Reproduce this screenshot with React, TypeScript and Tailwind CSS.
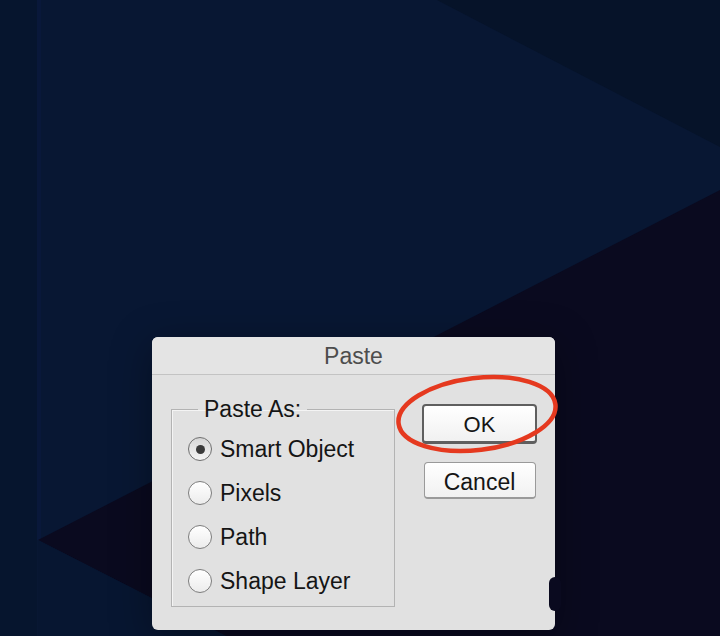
import { useState } from "react";

type Option = "smart" | "pixels" | "path" | "shape";

const options: { id: Option; label: string }[] = [
  { id: "smart", label: "Smart Object" },
  { id: "pixels", label: "Pixels" },
  { id: "path", label: "Path" },
  { id: "shape", label: "Shape Layer" },
];

function Backdrop() {
  return (
    <svg
      className="absolute inset-0"
      width="720"
      height="636"
      viewBox="0 0 720 636"
      aria-hidden
    >
      <rect x="0" y="0" width="720" height="636" fill="#081733" />
      <rect x="0" y="0" width="37" height="636" fill="#06152e" />
      <rect x="37" y="0" width="4" height="540" fill="#0a1a42" opacity="0.45" />
      <polygon points="437,0 720,0 720,147" fill="#061329" />
      <polygon points="38,540 720,190 720,636 226,636" fill="#0a0a1f" />
      <polygon points="38,540 226,636 38,636" fill="#071631" />
    </svg>
  );
}

function Radio({ checked }: { checked: boolean }) {
  return (
    <span
      className={
        checked
          ? "flex h-[24px] w-[24px] shrink-0 items-center justify-center rounded-full border border-[#6f6f6f] bg-gradient-to-b from-[#d6d6d6] to-[#f4f4f4]"
          : "flex h-[24px] w-[24px] shrink-0 items-center justify-center rounded-full border border-[#7d7d7d] bg-gradient-to-b from-[#ffffff] to-[#ececec]"
      }
    >
      {checked && <span className="h-[9px] w-[9px] rounded-full bg-[#3a3a3a]" />}
    </span>
  );
}

export default function App() {
  const [value, setValue] = useState<Option>("smart");

  return (
    <div className="relative h-[636px] w-[720px] overflow-hidden font-['Liberation_Sans',Arial,sans-serif]">
      <Backdrop />

      <div className="relative pl-[152px] pt-[337px]">
        <div className="relative h-[293px] w-[403px] rounded-[6px] bg-[#e1e1e1] shadow-[0_8px_40px_rgba(0,0,0,0.35)]">
          <div className="flex h-[38px] items-center justify-center rounded-t-[6px] border-b border-[#c3c3c3] bg-[#e4e4e4] pt-[2px] text-[23px] text-[#4d4d4d]">
            Paste
          </div>

          <div className="flex pl-[19px] pt-[20px]">
            <fieldset className="h-[212px] w-[224px] border border-[#b3b3b3] px-0 shadow-[inset_1px_1px_0_#f4f4f4]">
              <legend className="ml-[26px] px-[6px] text-[23px] leading-[28px] text-[#151515]">
                Paste As:
              </legend>
              <div className="mt-[4px] flex flex-col pl-[16px]">
                {options.map((o) => (
                  <label
                    key={o.id}
                    onClick={() => setValue(o.id)}
                    className="flex h-[44px] cursor-default items-center gap-[8px] text-[23px] text-[#151515]"
                  >
                    <Radio checked={value === o.id} />
                    <span>{o.label}</span>
                  </label>
                ))}
              </div>
            </fieldset>

            <div className="ml-[27px] flex w-[115px] flex-col items-center pt-[9px]">
              <button className="h-[40px] w-[115px] rounded-[4px] border-2 border-b-[3px] border-[#5f5f5f] bg-gradient-to-b from-[#ffffff] to-[#f1f1f1] pt-[2px] text-[22px] text-[#151515]">
                OK
              </button>
              <button className="mt-[18px] h-[37px] w-[112px] rounded-[4px] border border-b-[2px] border-[#9a9a9a] bg-gradient-to-b from-[#ffffff] to-[#f1f1f1] pt-[2px] text-[23px] text-[#151515]">
                Cancel
              </button>
            </div>
          </div>

          {/* dark notch on the right edge */}
          <span className="absolute left-[397px] top-[240px] h-[34px] w-[12px] rounded-full bg-[#0a0a1f]" />
        </div>

        {/* red annotation around OK */}
        <svg
          className="pointer-events-none absolute left-[392px] top-[366px]"
          width="172"
          height="96"
          viewBox="0 0 172 96"
          aria-hidden
        >
          <ellipse
            cx="85"
            cy="48"
            rx="79"
            ry="36"
            transform="rotate(-7 85 48)"
            fill="none"
            stroke="#e5391f"
            strokeWidth="4.5"
          />
        </svg>
      </div>
    </div>
  );
}
